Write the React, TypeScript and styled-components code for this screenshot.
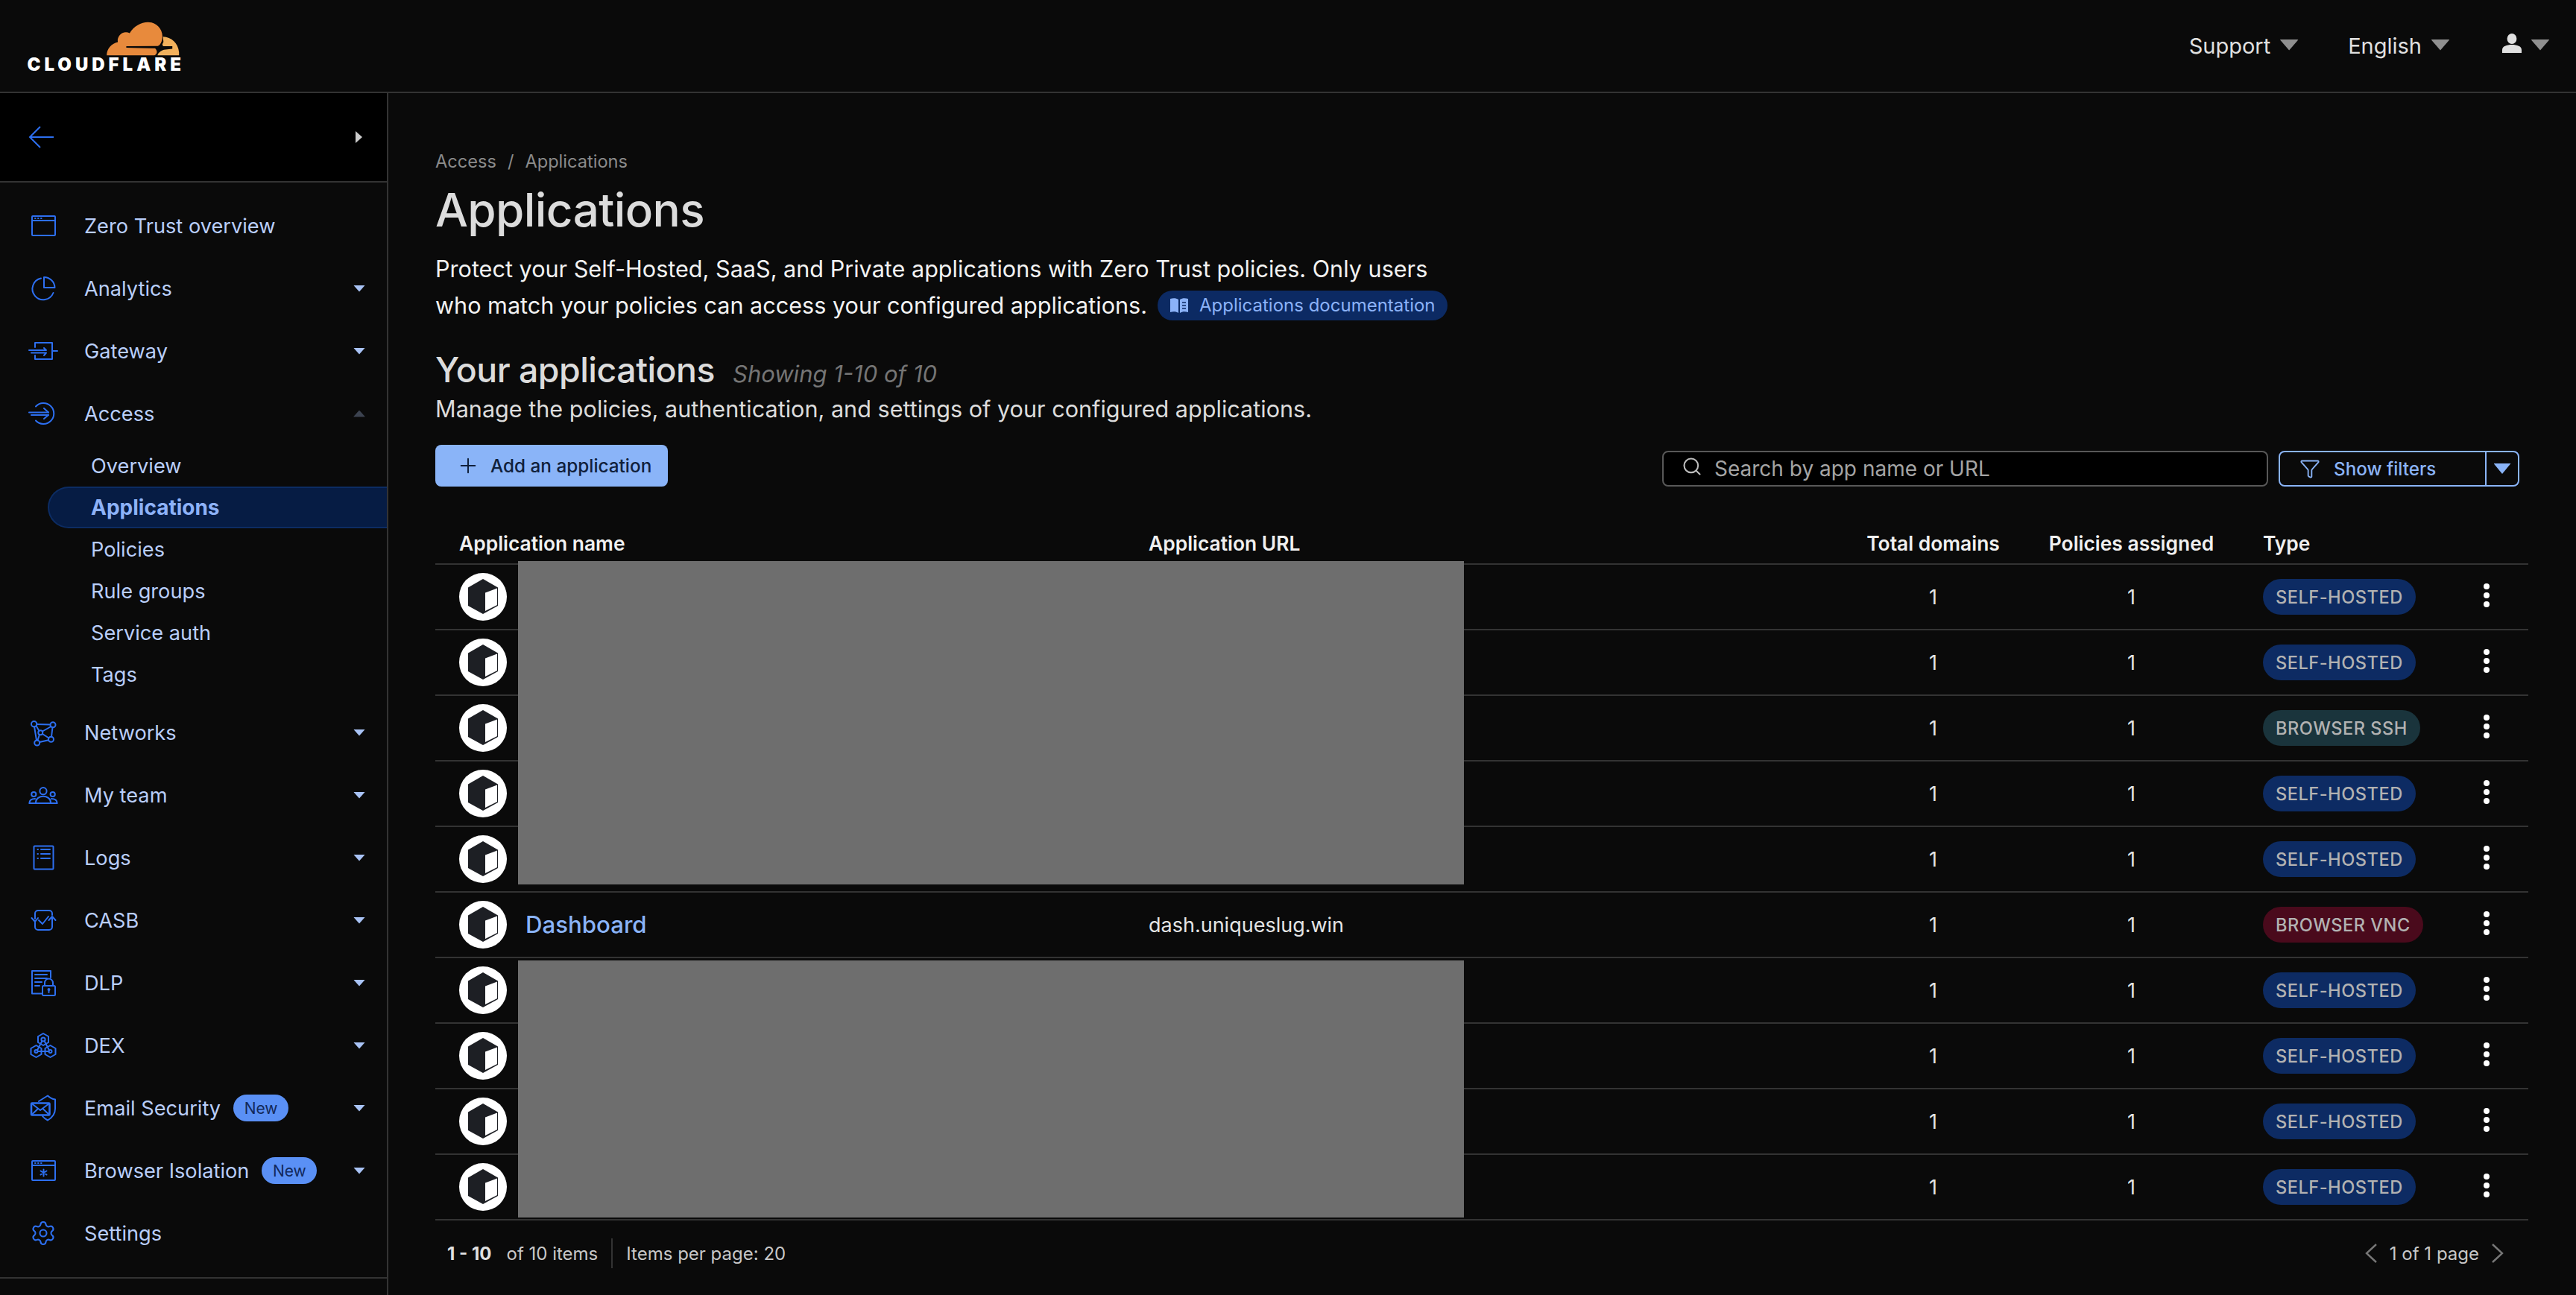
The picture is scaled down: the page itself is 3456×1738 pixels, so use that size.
import React from "react";
import styled, { createGlobalStyle } from "styled-components";
import { Settings as SettingsGear, Search, Plus, Funnel } from "lucide-react";

const Global = createGlobalStyle`
  html, body { margin: 0; padding: 0; background: #0a0a0a; }
  body { font-family: Inter, "Liberation Sans", sans-serif; overflow: hidden; }
  * { box-sizing: border-box; }
`;

const Page = styled.div`
  width: 3456px; height: 1738px; display: flex; flex-direction: column; background: #0a0a0a; overflow: hidden;
`;
const TopBar = styled.header`
  height: 125px; flex: none; display: flex; align-items: center; justify-content: space-between;
  border-bottom: 2px solid #333; padding: 0 35px 0 31px;
`;
const Brand = styled.div`
  display: flex; flex-direction: column; align-items: flex-end; width: 212px; padding-top: 2px;
`;
const BrandName = styled.span`
  font-weight: 900; font-size: 24px; line-height: 22px; letter-spacing: 5px; color: #fff; margin-right: -5px;
`;
const TopNav = styled.nav`
  display: flex; align-items: center;
`;
const TopItem = styled.div<{ $gap?: number }>`
  display: flex; align-items: center; gap: 12px; margin-left: ${p => p.$gap ?? 66}px;
  font-size: 29px; color: #e0e0e0; line-height: 40px;
`;
const TopCaret = styled.i`
  display: block; width: 26px; height: 15px; background: #8f8f8f;
  clip-path: polygon(0 0, 100% 0, 50% 100%); border-radius: 2px; margin-top: -3px;
`;
const Body = styled.div`
  flex: 1; display: flex; min-height: 0;
`;
const Sidebar = styled.aside`
  width: 521px; flex: none; border-right: 2px solid #333; display: flex; flex-direction: column;
`;
const BackRow = styled.div`
  height: 120px; flex: none; background: #000; border-bottom: 2px solid #333;
  display: flex; align-items: center; justify-content: space-between; padding: 0 33px 0 38px;
`;
const BackCaret = styled.i`
  display: block; width: 9px; height: 16px; background: #ccc; clip-path: polygon(0 0, 100% 50%, 0 100%);
`;
const SideNav = styled.nav`
  display: flex; flex-direction: column; padding-top: 16px; height: 1471px; border-bottom: 2px solid #333; flex: none;
`;
const NavRow = styled.div`
  height: 84px; flex: none; display: flex; align-items: center; padding: 0 29px 0 38px;
  color: #b9cefa; font-size: 27.2px;
  & > svg { flex: none; margin-right: 35px; color: #2d6ff0; }
`;
const NavLabel = styled.span`
  flex: none;
`;
const NewTag = styled.span`
  margin-left: 17px; height: 36px; width: 74px; border-radius: 18px; background: #5a90f5; color: #13295a;
  font-size: 21px; display: flex; align-items: center; justify-content: center;
`;
const Caret = styled.i<{ $up?: boolean }>`
  margin-left: auto; display: block; width: 16px; height: 9px; border-radius: 1px;
  background: ${p => (p.$up ? "#3c4350" : "#a9c3f5")};
  clip-path: ${p => (p.$up ? "polygon(50% 0, 100% 100%, 0 100%)" : "polygon(0 0, 100% 0, 50% 100%)")};
`;
const SubNav = styled.div`
  display: flex; flex-direction: column; margin-bottom: 8px;
`;
const SubItem = styled.div<{ $active?: boolean }>`
  height: 56px; display: flex; align-items: center; padding-left: ${p => (p.$active ? 56 : 58)}px;
  margin-left: 64px; font-size: ${p => (p.$active ? 28 : 27.2)}px;
  color: ${p => (p.$active ? "#8db2f8" : "#b9cefa")};
  font-weight: ${p => (p.$active ? 700 : 400)};
  background: ${p => (p.$active ? "#061c44" : "transparent")};
  border: ${p => (p.$active ? "2px solid #0c2c63" : "0")};
  border-right: 0;
  border-radius: 28px 0 0 28px;
`;
const Main = styled.main`
  flex: 1; min-width: 0; padding: 76px 64px 0 63px; display: flex; flex-direction: column;
`;
const Crumbs = styled.div`
  font-size: 23.6px; line-height: 32px; color: #8a8a8a; display: flex; gap: 15px;
`;
const Title = styled.h1`
  margin: 13px 0 0; font-size: 62px; line-height: 72px; font-weight: 500; color: #dcdcdc; letter-spacing: -0.6px;
`;
const Lead = styled.p`
  margin: 18px 0 0; font-size: 30.6px; line-height: 49px; color: #f2f2f2; font-weight: 400; white-space: nowrap;
`;
const DocLink = styled.a`
  display: inline-flex; align-items: center; gap: 14px; height: 40px; padding: 0 16px; margin-left: 14px; border-radius: 20px;
  background: #0c2a63; color: #8bb2f8; font-size: 24px; vertical-align: 0; line-height: 40px; white-space: nowrap;
`;
const SectionHead = styled.div`
  margin-top: 32px; display: flex; align-items: baseline; gap: 24px; height: 60px; line-height: 60px;
`;
const SectionTitle = styled.h2`
  margin: 0; font-size: 46.4px; font-weight: 500; color: #dcdcdc; letter-spacing: -0.5px;
`;
const SectionCount = styled.span`
  font-size: 31px; font-style: italic; color: #757575;
`;
const SectionText = styled.p`
  margin: 1px 0 0; font-size: 30.6px; line-height: 44px; color: #dcdcdc;
`;
const Toolbar = styled.div`
  margin-top: 26px; display: flex; align-items: flex-end; padding-right: 12px; height: 56px; flex: none;
`;
const AddButton = styled.button`
  width: 312px; height: 56px; border: 0; border-radius: 8px; background: #8ab4f8; color: #10203b; padding: 0 0 0 28px;
  display: flex; align-items: center; gap: 14px; font: 500 24.3px Inter, sans-serif;
`;
const SearchBox = styled.div`
  margin-left: auto; width: 813px; height: 48px; background: #000; border: 2px solid #585858; border-radius: 8px;
  display: flex; align-items: center; padding-left: 24px; gap: 16px; color: #a4a4a4; font-size: 28px;
  & svg { color: #bdbdbd; margin-top: -6px; }
`;
const FilterGroup = styled.div`
  margin-left: 14px; width: 323px; height: 48px; border: 2px solid #8ab4f8; border-radius: 8px; display: flex; color: #8ab4f8; font-size: 24.2px; font-weight: 500;
`;
const FilterMain = styled.div`
  flex: 1; display: flex; align-items: center; gap: 18px; padding-left: 26px; border-right: 2px solid #8ab4f8;
`;
const FilterCaret = styled.div`
  width: 42px; display: flex; align-items: center; justify-content: center;
  &::before { content: ""; width: 23px; height: 14px; background: #8ab4f8; clip-path: polygon(0 0, 100% 0, 50% 100%); }
`;
const Cols = "957px 963px 179px 353px 254px 92px";
const HeadRow = styled.div`
  height: 105px; flex: none; display: grid; grid-template-columns: ${Cols}; align-items: end; padding-bottom: 11px;
  border-bottom: 2px solid #333; font-size: 26.4px; font-weight: 600; color: #f0f0f0; line-height: 32px;
`;
const HeadCell = styled.div<{ $center?: boolean; $pad?: boolean }>`
  text-align: ${p => (p.$center ? "center" : "left")}; padding-left: ${p => (p.$pad ? 32 : 0)}px; white-space: nowrap;
`;
const Rows = styled.div`
  position: relative; flex: none;
`;
const Redaction = styled.div<{ $top: number; $height: number }>`
  position: absolute; left: 111px; width: 1269px; top: ${p => p.$top}px; height: ${p => p.$height}px; background: #6e6e6e;
`;
const Row = styled.div`
  height: 88px; display: grid; grid-template-columns: ${Cols}; align-items: center; border-bottom: 2px solid #333;
  color: #e4e4e4; font-size: 27px;
`;
const NameCell = styled.div`
  display: flex; align-items: center; gap: 25px; padding-left: 32px;
`;
const AppName = styled.a`
  color: #8ab4f8; font-size: 31.2px; font-weight: 500;
`;
const UrlCell = styled.div`
  font-size: 27px;
`;
const NumCell = styled.div`
  text-align: center; font-size: 27px;
`;
const TypeBadge = styled.span<{ $bg: string }>`
  display: inline-flex; align-items: center; height: 48px; padding: 0 17px; border-radius: 24px; background: ${p => p.$bg};
  color: #b2b2b2; font-size: 23.6px; font-weight: 500; letter-spacing: 0.5px; white-space: nowrap;
`;
const Kebab = styled.div`
  justify-self: center; display: flex; flex-direction: column; gap: 4.4px; margin-top: -4px;
  & i { display: block; width: 8px; height: 8px; border-radius: 50%; background: #fff; }
`;
const Footer = styled.div`
  height: 88px; flex: none; display: flex; align-items: center; font-size: 24px; color: #c8c8c8; padding-left: 16px; padding-right: 32px;
`;
const FooterStrong = styled.strong`
  font-weight: 700; color: #e0e0e0; margin-right: 20px;
`;
const FooterDivider = styled.span`
  width: 2px; height: 40px; background: #333; margin: 0 18px;
`;
const Pager = styled.div`
  margin-left: auto; display: flex; align-items: center; gap: 16px;
`;

const Brandmark = () => (
  <svg width="102" height="48" viewBox="405 55 305 145" aria-hidden="true">
    <path fill="#e88a3c" d="M410 195 C410 170 428 147 455 141 C450 115 478 92 503 105 C522 72 560 55 592 62 C620 70 640 97 635 128 C632 142 628 150 618 158 L490 158 L490 164 L606 166 C612 172 614 178 613 184 C611 191 606 195 598 195 Z" />
    <path fill="#f2b15c" d="M638 119 C672 120 700 146 703 182 L703 195 L616 195 C618 184 630 176 642 172 L676 168 L676 158 L640 158 C632 156 636 148 640 140 Z" />
    <path fill="#0a0a0a" d="M490 158 L618 157 L634 150 L640 160 L676 160 L640 165 L632 172 L618 165 L490 164 Z" />
  </svg>
);

const stroke = { fill: "none", stroke: "currentColor", strokeWidth: 2, strokeLinejoin: "round" as const, strokeLinecap: "round" as const };
const Ico = ({ children }: { children: React.ReactNode }) => (
  <svg width="40" height="40" viewBox="0 0 40 40" {...stroke}>{children}</svg>
);

const icons: Record<string, React.ReactNode> = {
  overview: <Ico><rect x="5" y="7" width="31" height="26" rx="1" /><path d="M5 13 H36" /><path d="M9 10 H9.6 M13 10 H13.6 M17 10 H17.6" /></Ico>,
  analytics: <Ico><path d="M21 5 A14.5 14.5 0 0 1 35.5 19 H21 Z" /><path d="M17 6.5 A14.5 14.5 0 1 0 33.5 26" /></Ico>,
  gateway: <Ico><path d="M9 15 V9 H32 V31 H9 V26" /><path d="M32 20 H39" /><path d="M1 19 H24 L21 16" /><path d="M4 22.5 H24 L21 26" /></Ico>,
  access: <Ico><path d="M10 10.5 A14 14 0 1 1 10 29.5" /><path d="M1 18.5 H27" /><path d="M4 22 H27" /><path d="M21 13 L27 18.5" /><path d="M21 27 L27 22" /></Ico>,
  networks: <Ico><circle cx="7.7" cy="8.7" r="3.7" /><circle cx="33" cy="9.7" r="3.5" /><circle cx="30.5" cy="29.3" r="3.5" /><circle cx="11.7" cy="34" r="3.5" /><circle cx="16.3" cy="20.3" r="3" /><path d="M11 8.9 L29.5 9.6 M32.5 13 L31 26 M27.2 30.2 L15 33 M11 30.5 L8 12 M10.5 11 L14.5 18 M30.5 12 L19 18.5 M19 22 L27.5 27.5 M15 23 L12.5 30.5" /></Ico>,
  team: <Ico><circle cx="20" cy="14.7" r="4.6" /><circle cx="7.3" cy="19" r="3.1" /><circle cx="32.7" cy="19" r="3.1" /><path d="M10 30 C10 24.5 15 21.8 20 21.8 C25 21.8 30 24.5 30 30" /><path d="M1.5 31 H38.5" /><path d="M1.5 31 C1.5 27 4.5 25 9 25" /><path d="M38.5 31 C38.5 27 35.5 25 31 25" /></Ico>,
  logs: <Ico><rect x="7.5" y="4.5" width="26" height="31" rx="1" /><path d="M12.5 9 H13 M12.5 15 H13 M12.5 21 H13" /><path d="M17 9 H29 M17 15 H29 M17 21 H29" /></Ico>,
  casb: <Ico><path d="M9 18 V11 A4 4 0 0 1 13 7 H28 A4 4 0 0 1 32 11 V13" /><path d="M9 23 V29 A4 4 0 0 0 13 33 H28 A4 4 0 0 0 32 29 V16" /><path d="M4.5 17 L9 22 L13 17" /><path d="M27.5 20 L32 15 L36.5 20" /><path d="M14 20 L19 25 L27 15" /></Ico>,
  dlp: <Ico><path d="M18 34.5 H5 V4 H30 V13" /><path d="M9 9 H25 M9 14 H25 M9 19 H18 M9 24 H15" /><rect x="19" y="24" width="17" height="13" rx="1.5" /><path d="M22 24 V20 A5.5 5.5 0 0 1 33 20 V24" /><path d="M27.5 29 V33" /><circle cx="27.5" cy="29" r="1" /></Ico>,
  dex: <Ico><path d="M20 4 L27 8 V16 L20 20 L13 16 V8 Z" /><path d="M10.5 20 L17.5 24 V32 L10.5 36 L3.5 32 V24 Z" /><path d="M29.5 20 L36.5 24 V32 L29.5 36 L22.5 32 V24 Z" /><circle cx="20" cy="12" r="2.6" /><circle cx="10.5" cy="28" r="2" /><circle cx="29.5" cy="28" r="2" /><path d="M18.5 14 L12 26.5 M21.5 14 L28 26.5 M12.5 28 H27.5" /></Ico>,
  email: <Ico><path d="M14 11 L26 3.5 C29 6.5 32 8 36 8.5 V21 C36 28 31 33.5 26 36.5 C23 35 21 33.5 19 31" /><rect x="4" y="13.5" width="24.5" height="16" rx="1" strokeWidth="2.6" /><path d="M4.5 14 L16 23 L28 14" /><path d="M4.5 29 L13 21 M28 29 L19.5 21" /></Ico>,
  isolation: <Ico><rect x="5" y="7" width="31" height="26" rx="1" /><path d="M5 13 H36" /><path d="M9 10 H9.6 M13 10 H13.6 M17 10 H17.6" /><path d="M20.5 18.5 V27.5 M16.5 20.5 L24.5 25.5 M24.5 20.5 L16.5 25.5" /></Ico>,
};

const BackArrow = () => (
  <svg width="36" height="32" viewBox="0 0 36 32" fill="none" stroke="#2d6ff0" strokeWidth="2">
    <path d="M2 16 H34" /><path d="M16 2 L2 16 L16 30" />
  </svg>
);
const UserIcon = () => (
  <svg width="26" height="26" viewBox="0 0 26 26" fill="#e0e0e0" style={{ marginTop: -8 }}>
    <ellipse cx="13" cy="7" rx="6.4" ry="7" />
    <path d="M0 26 V22 C0 17 6 15 13 15 C20 15 26 17 26 22 V26 Z" />
  </svg>
);
const BookIcon = () => (
  <svg width="26" height="22" viewBox="0 0 26 22" fill="#8bb2f8">
    <path d="M1 2 C5 1 9 1 12 3 V21 C9 19 5 19 1 20 Z" />
    <path d="M25 2 C21 1 17 1 14 3 V21 C17 19 21 19 25 20 Z" />
    <path d="M17 7 H22 M17 11 H22 M17 15 H22" stroke="#0c2a63" strokeWidth="1.5" />
  </svg>
);
const AppCube = () => (
  <svg width="64" height="64" viewBox="0 0 64 64">
    <circle cx="32" cy="32" r="32" fill="#fff" />
    <path fill="#1d1f24" d="M32 8 L52 19.5 V44 L32 55 L12 44 V19.5 Z" />
    <path fill="#fff" d="M35 26.5 L51 20.5 V43 L35 51 Z" />
  </svg>
);
const PagerChevron = ({ next }: { next?: boolean }) => (
  <svg width="18" height="28" viewBox="0 0 18 28" fill="none" stroke="#777" strokeWidth="2.4">
    <path d={next ? "M2 2 L15 14 L2 26" : "M16 2 L3 14 L16 26"} />
  </svg>
);

type Item = { key: string; label: string; caret?: boolean; tag?: boolean };
const beforeAccess: Item[] = [
  { key: "overview", label: "Zero Trust overview" },
  { key: "analytics", label: "Analytics", caret: true },
  { key: "gateway", label: "Gateway", caret: true },
];
const afterAccess: Item[] = [
  { key: "networks", label: "Networks", caret: true },
  { key: "team", label: "My team", caret: true },
  { key: "logs", label: "Logs", caret: true },
  { key: "casb", label: "CASB", caret: true },
  { key: "dlp", label: "DLP", caret: true },
  { key: "dex", label: "DEX", caret: true },
  { key: "email", label: "Email Security", caret: true, tag: true },
  { key: "isolation", label: "Browser Isolation", caret: true, tag: true },
];
const subItems = ["Overview", "Applications", "Policies", "Rule groups", "Service auth", "Tags"];

const NavEntry = ({ item }: { item: Item }) => (
  <NavRow>
    {icons[item.key]}
    <NavLabel>{item.label}</NavLabel>
    {item.tag && <NewTag>New</NewTag>}
    {item.caret && <Caret />}
  </NavRow>
);

const blue = "#0d2b63";
const rows: { name?: string; url?: string; type: string; bg: string }[] = [
  { type: "SELF-HOSTED", bg: blue },
  { type: "SELF-HOSTED", bg: blue },
  { type: "BROWSER SSH", bg: "#1a343c" },
  { type: "SELF-HOSTED", bg: blue },
  { type: "SELF-HOSTED", bg: blue },
  { name: "Dashboard", url: "dash.uniqueslug.win", type: "BROWSER VNC", bg: "#4a0a1c" },
  { type: "SELF-HOSTED", bg: blue },
  { type: "SELF-HOSTED", bg: blue },
  { type: "SELF-HOSTED", bg: blue },
  { type: "SELF-HOSTED", bg: blue },
];

export default function App() {
  return (
    <Page>
      <Global />
      <TopBar>
        <Brand>
          <Brandmark />
          <BrandName>CLOUDFLARE</BrandName>
        </Brand>
        <TopNav>
          <TopItem>Support<TopCaret /></TopItem>
          <TopItem>English<TopCaret /></TopItem>
          <TopItem $gap={70}><UserIcon /><TopCaret /></TopItem>
        </TopNav>
      </TopBar>
      <Body>
        <Sidebar>
          <BackRow><BackArrow /><BackCaret /></BackRow>
          <SideNav>
            {beforeAccess.map(i => <NavEntry key={i.key} item={i} />)}
            <NavRow>
              {icons.access}
              <NavLabel>Access</NavLabel>
              <Caret $up />
            </NavRow>
            <SubNav>
              {subItems.map(s => <SubItem key={s} $active={s === "Applications"}>{s}</SubItem>)}
            </SubNav>
            {afterAccess.map(i => <NavEntry key={i.key} item={i} />)}
            <NavRow>
              <SettingsGear size={36} strokeWidth={1.4} style={{ marginLeft: 2, marginRight: 37 }} />
              <NavLabel>Settings</NavLabel>
            </NavRow>
          </SideNav>
        </Sidebar>
        <Main>
          <Crumbs><span>Access</span><span>/</span><span>Applications</span></Crumbs>
          <Title>Applications</Title>
          <Lead>
            Protect your Self-Hosted, SaaS, and Private applications with Zero Trust policies. Only users<br />
            who match your policies can access your configured applications.
            <DocLink><BookIcon />Applications documentation</DocLink>
          </Lead>
          <SectionHead>
            <SectionTitle>Your applications</SectionTitle>
            <SectionCount>Showing 1-10 of 10</SectionCount>
          </SectionHead>
          <SectionText>Manage the policies, authentication, and settings of your configured applications.</SectionText>
          <Toolbar>
            <AddButton><Plus size={32} strokeWidth={1.5} />Add an application</AddButton>
            <SearchBox><Search size={28} strokeWidth={1.8} />Search by app name or URL</SearchBox>
            <FilterGroup>
              <FilterMain><Funnel size={28} strokeWidth={1.6} />Show filters</FilterMain>
              <FilterCaret />
            </FilterGroup>
          </Toolbar>
          <HeadRow>
            <HeadCell $pad>Application name</HeadCell>
            <HeadCell>Application URL</HeadCell>
            <HeadCell $center>Total domains</HeadCell>
            <HeadCell $center>Policies assigned</HeadCell>
            <HeadCell>Type</HeadCell>
            <HeadCell />
          </HeadRow>
          <Rows>
            {rows.map((r, i) => (
              <Row key={i}>
                <NameCell><AppCube />{r.name && <AppName>{r.name}</AppName>}</NameCell>
                <UrlCell>{r.url}</UrlCell>
                <NumCell>1</NumCell>
                <NumCell>1</NumCell>
                <div><TypeBadge $bg={r.bg}>{r.type}</TypeBadge></div>
                <Kebab><i /><i /><i /></Kebab>
              </Row>
            ))}
            <Redaction $top={-5} $height={434} />
            <Redaction $top={531} $height={345} />
          </Rows>
          <Footer>
            <FooterStrong>1 - 10</FooterStrong>of 10 items
            <FooterDivider />Items per page: 20
            <Pager>
              <PagerChevron />1 of 1 page<PagerChevron next />
            </Pager>
          </Footer>
        </Main>
      </Body>
    </Page>
  );
}
